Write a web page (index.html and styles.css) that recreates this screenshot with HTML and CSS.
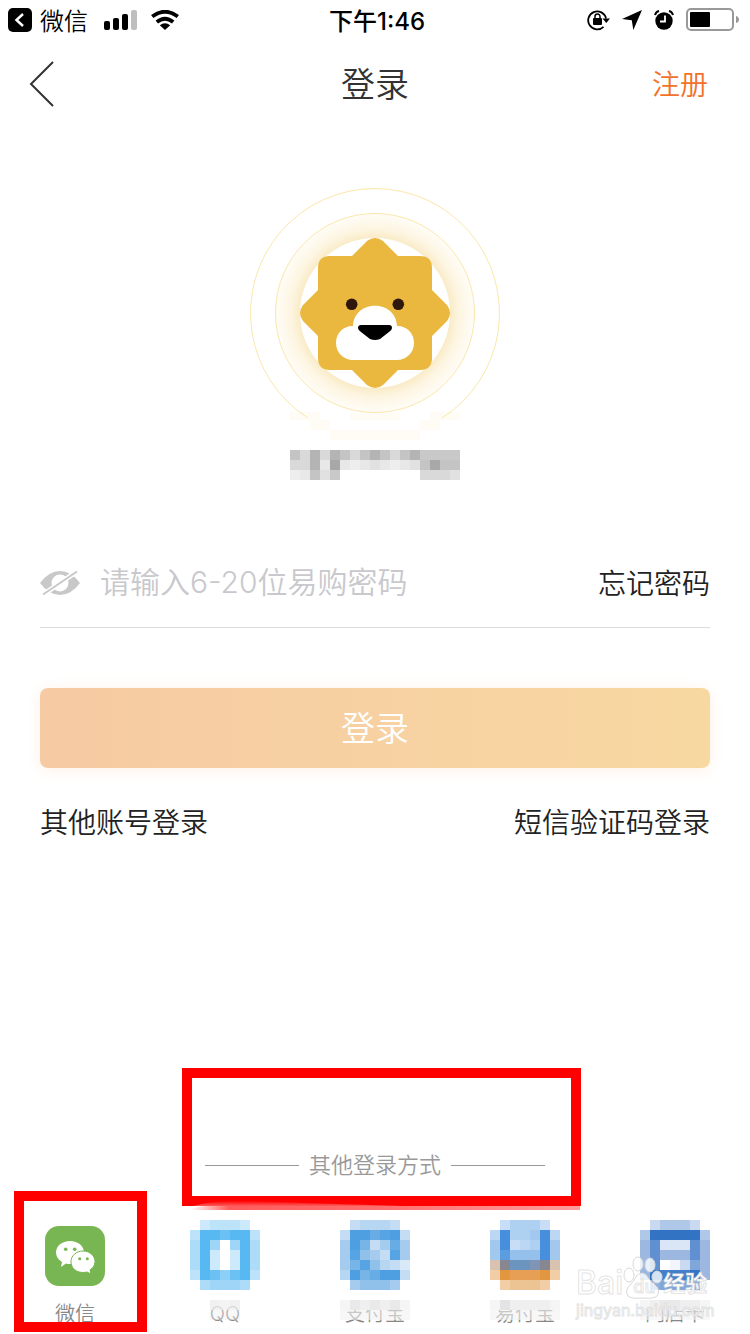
FILE: index.html
```html
<!DOCTYPE html>
<html lang="zh-CN">
<head>
    <meta charset="UTF-8">
    <title>登录</title>
    <meta name="viewport" content="width=device-width,initial-scale=1">
    <link rel="stylesheet" href="styles.css">
</head>
<body>
<div class="page">

    <!--状态栏-->
    <div class="status">
        <div class="status-left">
            <svg width="24" height="24" viewBox="0 0 24 24"><rect width="24" height="24" rx="5"/><path d="M15 6L8.500 12L15 18" fill="none" stroke="#fff" stroke-width="2.500"/></svg>
            <span class="status-app">微信</span>
            <svg class="signal" width="33" height="20" viewBox="0 0 33 20"><rect y="11" width="6" height="9" rx="2"/><rect x="9" y="8" width="6" height="12" rx="2"/><rect x="18" y="4" width="6" height="16" rx="2"/><rect x="27" width="6" height="20" rx="2" fill="#bfbfbf"/></svg>
            <svg width="28" height="20" viewBox="0 0 28 20"><g fill="none" stroke="#000" stroke-width="3.800"><path d="M1.200 6.500Q14-3.100 26.800 6.500"/><path d="M5.800 12Q14 5.400 22.200 12"/></g><path d="M14 20L8.800 15.200Q14 11.400 19.200 15.200Z"/></svg>
        </div>
        <div class="status-time">下午1:46</div>
        <div class="status-right">
            <svg width="23" height="22" viewBox="0 0 23 22"><path d="M16.500 17.800A9 9 0 1 1 19 9.500" fill="none" stroke="#000" stroke-width="1.800"/><path d="M15.500 9.500H23L19.300 14Z"/><rect x="6" y="9" width="9" height="7" rx="1"/><path d="M8 10V7.500a2.500 2.500 0 0 1 5 0V10" fill="none" stroke="#000" stroke-width="1.500"/></svg>
            <svg width="20" height="20" viewBox="0 0 20 20"><path d="M20 0L11.300 20L9.800 10.200L0 9Z"/></svg>
            <svg width="20" height="20" viewBox="0 0 20 20"><circle cx="10" cy="11" r="8.700"/><path d="M1 5Q2 1.500 5 1M19 5Q18 1.500 15 1" fill="none" stroke="#000" stroke-width="2"/><path d="M11 5.500V11.500H6" fill="none" stroke="#fff" stroke-width="1.800"/></svg>
            <svg width="54" height="24" viewBox="0 0 54 24"><rect x="1" y="1" width="46" height="21" rx="4" fill="none" stroke="#999" stroke-width="2"/><rect x="4" y="4" width="20" height="15" rx="1"/><path d="M50 8Q53 9 53 11.500T50 15Z" fill="#999"/></svg>
        </div>
    </div>

    <!--导航-->
    <header class="nav">
        <button class="nav-back" type="button" aria-label="返回">
            <svg width="26" height="46" viewBox="0 0 26 46"><path d="M25 1L3 23L25 45" fill="none" stroke="#333" stroke-width="2"/></svg>
        </button>
        <h1>登录</h1>
        <a class="nav-reg" href="#register">注册</a>
    </header>

    <!--头像-->
    <svg class="avatar" width="250" height="252" viewBox="0 0 250 252">
        <defs>
            <radialGradient id="glow" gradientUnits="userSpaceOnUse" cx="125" cy="125" r="100">
                <stop offset=".74" stop-color="#f9eac4"/>
                <stop offset=".84" stop-color="#fdf5e1"/>
                <stop offset="1" stop-color="#fffdf8"/>
            </radialGradient>
        </defs>
        <path d="M40 224h30v8h-30zM180 224h30v8h-30zM60 232h20v10h-20zM170 232h20v10h-20zM80 242h90v10h-90zM100 225h50v7h-50z" fill="#fefcf5"/>
        <circle cx="125" cy="125" r="99.500" fill="url(#glow)" stroke="#fbe7ac"/>
        <path d="M58 230A124.500 124.500 0 1 1 192 230" fill="none" stroke="#fbe7ac"/>
        <circle cx="125" cy="125" r="75" fill="#fff"/>
        <path d="M102 68L117 53Q125 47 133 53L148 68H170Q182 68 182 80V102L197 117Q203 125 197 133L182 148V170Q182 182 170 182H148L133 197Q125 203 117 197L102 182H80Q68 182 68 170V148L53 133Q47 125 53 117L68 102V80Q68 68 80 68Z" fill="#eab73f"/>
        <circle cx="101.700" cy="116.300" r="5.800" fill="#2f170c"/>
        <circle cx="148.300" cy="116.300" r="5.800" fill="#2f170c"/>
        <path d="M103 138C104 111 146 111 147 138C158 138 164 146 164 155C164 165 156 172 147 172H103C94 172 86 165 86 155C86 146 92 138 103 138Z" fill="#fff"/>
        <path d="M111 137H139Q142 137 142 140Q142 142 139 144L130 151Q125 153 120 151L111 144Q108 142 108 140Q108 137 111 137Z"/>
    </svg>

    <!--打码账号-->
    <svg class="account" width="170" height="30" viewBox="0 0 17 3" shape-rendering="crispEdges">
        <path stroke="#c4c4c4" d="M0 .5h1M5 .5h1M7 .5h1M9 .5h1M11 .5h1M13 1.500h1M15 1.500h2M2 2.500h1"/>
        <path stroke="#c9c9c9" d="M13 .5h4M4 2.500h1"/>
        <path stroke="#d9d9d9" d="M1 .5h1M3 .5h1M6 .5h1M10 .5h1M0 1.500h2M13 2.500h3"/>
        <path stroke="#b4b4b4" d="M2 .5h1M4 .5h1M8 .5h1M12 .5h1M2 1.500h1"/>
        <path stroke="#a8a8a8" d="M4 1.500h1M14 1.500h1"/>
        <path stroke="#e8e8e8" d="M3 1.500h1M5 1.500h1M7 1.500h1M9 1.500h1M11 1.500h1M1 2.500h1"/>
        <path stroke="#eee" d="M6 1.500h1M10 1.500h1M0 2.500h1"/>
        <path stroke="#e1e1e1" d="M8 1.500h1M12 1.500h1M3 2.500h1M16 2.500h1"/>
    </svg>

    <!--登录表单-->
    <form class="form">
        <div class="field">
            <button class="eye" type="button" aria-label="显示密码">
                <svg width="40" height="26" viewBox="0 0 40 26"><path d="M0 13Q9 1 20 1T40 13Q31 25 20 25T0 13Z" fill="#c8c8c8"/><circle cx="20" cy="13" r="6.500" fill="none" stroke="#fff" stroke-width="4"/><path d="M1 26L39 0" stroke="#fff" stroke-width="5"/><circle cx="20" cy="13" r="6" fill="#fff"/><path d="M3 24.500L37 1.500" stroke="#c8c8c8" stroke-width="2"/></svg>
            </button>
            <input type="password" aria-label="密码" placeholder="请输入6-20位易购密码">
            <a href="#forget">忘记密码</a>
        </div>
        <button class="submit" type="submit">登录</button>
        <div class="links">
            <a href="#account">其他账号登录</a>
            <a href="#sms">短信验证码登录</a>
        </div>
    </form>

    <!--其他登录方式-->
    <div class="other">
        <span>其他登录方式</span>
        <div class="mark mark-other"></div>
        <svg class="smear" width="398" height="12" viewBox="0 0 398 12">
            <defs>
                <linearGradient id="smear" x2="1"><stop stop-color="#ff6b6b" stop-opacity="0"/><stop offset=".1" stop-color="#ff5c5c"/><stop offset=".5" stop-color="#ff7070"/><stop offset="1" stop-color="#ff9c9c"/></linearGradient>
                <linearGradient id="smear-top" x2="0" y2="1"><stop stop-color="#ff5c5c" stop-opacity="0"/><stop offset="1" stop-color="#ff5c5c"/></linearGradient>
            </defs>
            <path d="M12 8Q30 2 70 3Q110 5 220 8Z" fill="url(#smear-top)"/>
            <path d="M8 12Q16 8 24 8H398V12Z" fill="url(#smear)"/>
        </svg>
    </div>
    <div class="ways">
        <a class="way" href="#wechat">
            <span class="way-icon">
                <svg width="60" height="60" viewBox="0 0 60 60"><rect width="60" height="60" rx="14" fill="#78b653"/><path d="M25 15C17 15 11 20 11 26.500C11 30.500 13 33.500 17 36L16 41L21 37.500Q23 38 25 38C33 38 39 33 39 26.500C39 20 33 15 25 15Z" fill="#fff"/><path d="M38 25C31 25 26 30 26 35.700C26 42 31 46.500 38 46.500Q40 46.500 42 46L46 48L45 44C48 42 50 39 50 35.700C50 30 45 25 38 25Z" fill="#fff" stroke="#78b653"/><g fill="#78b653"><circle cx="20.700" cy="23.300" r="1.800"/><circle cx="29.700" cy="23.300" r="1.800"/><circle cx="34.700" cy="32.700" r="1.500"/><circle cx="42.300" cy="32.700" r="1.500"/></g></svg>
            </span>
            <span class="way-name">微信</span>
            <span class="mark mark-wechat"></span>
        </a>
        <a class="way" href="#qq">
            <svg width="70" height="70" viewBox="0 0 7 7" shape-rendering="crispEdges">
                <path stroke="#58b8f2" d="M1 1.500h5M1 2.500h1M5 2.500h1M1 3.500h1M5 3.500h1M1 4.500h1M5 4.500h1M1 5.500h1M5 5.500h1"/>
                <path stroke="#cdeafc" d="M1 .5h1M5 .5h1M2 3.500h1M4 3.500h1M2 4.500h1M4 4.500h1"/>
                <path stroke="#bce3fa" d="M2 .5h3M0 1.500h1M6 1.500h1M0 5.500h1M6 5.500h1"/>
                <path stroke="#addcf9" d="M0 2.500h1M6 2.500h1M0 3.500h1M6 3.500h1M0 4.500h1M6 4.500h1M1 6.500h1M5 6.500h1"/>
                <path stroke="#9fd6f7" d="M2 2.500h1M4 2.500h1M2 6.500h3"/>
                <path stroke="#6cc1f4" d="M3 1.500h1M2 5.500h1M4 5.500h1"/>
                <path stroke="#8cd0f8" d="M3 5.500h1"/>
            </svg>
            <span class="way-name">QQ</span>
            <svg class="haze" width="70" height="20" viewBox="0 0 7 2" shape-rendering="crispEdges"><path stroke="#ededed" stroke-opacity=".8" d="M2 .5h1M4 .5h1"/><path stroke="#f1f1f1" stroke-opacity=".8" d="M3 .5h1"/><path stroke="#eee" stroke-opacity=".4" d="M2 1.500h3"/></svg>
        </a>
        <a class="way" href="#alipay">
            <svg width="70" height="70" viewBox="0 0 7 7" shape-rendering="crispEdges">
                <path stroke="#4d9fe2" d="M1 1.500h2M5 1.500h1M1 2.500h1M1 5.500h1M4 5.500h2"/>
                <path stroke="#56a4e3" d="M4 1.500h1M1 3.500h1M5 3.500h1M2 4.500h1"/>
                <path stroke="#68ace5" d="M3 1.500h1M5 2.500h1M3 5.500h1"/>
                <path stroke="#78b5e7" d="M2 2.500h1M1 4.500h1M2 5.500h1"/>
                <path stroke="#8fc1eb" d="M2 3.500h1M3 4.500h1M2 6.500h3"/>
                <path stroke="#a5ccef" d="M0 2.500h1M4 2.500h1M6 2.500h1M0 3.500h1M3 3.500h1M6 3.500h1M0 4.500h1M1 6.500h1M5 6.500h1"/>
                <path stroke="#b7d6f2" d="M2 .5h3M4 4.500h1M0 5.500h1"/>
                <path stroke="#c4ddf5" d="M1 .5h1M5 .5h1M0 1.500h1M6 1.500h1M3 2.500h1M4 3.500h1M5 4.500h1M6 5.500h1"/>
                <path stroke="#d8e9f8" d="M6 4.500h1"/>
            </svg>
            <span class="way-name">支付宝</span>
            <svg class="haze" width="70" height="20" viewBox="0 0 7 2" shape-rendering="crispEdges"><path stroke="#f5f5f5" d="M0 .5h1M6 .5h1"/><path stroke="#e9e9e9" d="M1 .5h1M3 .5h1M5 .5h1"/><path stroke="#efefef" d="M2 .5h1M4 .5h1"/><path stroke="#f2f2f2" stroke-opacity=".6" d="M0 1.500h7"/></svg>
        </a>
        <a class="way" href="#yifubao">
            <svg width="70" height="70" viewBox="0 0 7 7" shape-rendering="crispEdges">
                <path stroke="#478fdd" d="M1 1.500h1M5 1.500h1M1 2.500h1M5 2.500h1M5 3.500h1"/>
                <path stroke="#5b9de0" d="M1 3.500h1"/>
                <path stroke="#96c0ec" d="M2 3.500h3"/>
                <path stroke="#a2c8ee" d="M4 1.500h1M0 2.500h1M6 2.500h1M0 3.500h1M6 3.500h1"/>
                <path stroke="#aed0f1" d="M2 .5h3M2 1.500h2M4 2.500h1"/>
                <path stroke="#bcd7f3" d="M0 1.500h1M6 1.500h1M3 2.500h1"/>
                <path stroke="#c8def6" d="M1 .5h1M5 .5h1M2 2.500h1"/>
                <path stroke="#d9c2b0" d="M0 4.500h1M6 4.500h1"/>
                <path stroke="#868790" d="M1 4.500h1M5 4.500h1"/>
                <path stroke="#6b94bf" d="M2 4.500h2"/>
                <path stroke="#8095b5" d="M4 4.500h1"/>
                <path stroke="#e29640" d="M1 5.500h1M5 5.500h1"/>
                <path stroke="#e69f55" d="M2 5.500h3"/>
                <path stroke="#f2cea6" d="M0 5.500h1M6 5.500h1M1 6.500h1M5 6.500h1"/>
                <path stroke="#ecc392" d="M2 6.500h3"/>
            </svg>
            <span class="way-name">易付宝</span>
            <svg class="haze" width="70" height="20" viewBox="0 0 7 2" shape-rendering="crispEdges"><path stroke="#f5f5f5" d="M0 .5h1M6 .5h1"/><path stroke="#e4e4e4" d="M1 .5h1"/><path stroke="#efefef" d="M2 .5h4"/><path stroke="#f2f2f2" stroke-opacity=".6" d="M0 1.500h7"/></svg>
        </a>
        <a class="way" href="#card">
            <svg width="70" height="70" viewBox="0 0 7 7" shape-rendering="crispEdges">
                <path stroke="#3373c4" d="M1 1.500h5M1 5.500h1M5 5.500h1"/>
                <path stroke="#4480ca" d="M2 5.500h3"/>
                <path stroke="#6090d2" d="M1 2.500h1M5 2.500h1M1 3.500h1M5 3.500h1M1 4.500h1"/>
                <path stroke="#80a6da" d="M5 4.500h1M2 6.500h3"/>
                <path stroke="#8fb0dd" d="M1 6.500h1M5 6.500h1"/>
                <path stroke="#9cb8e1" d="M0 2.500h1M6 2.500h1M0 3.500h1M2 3.500h3M6 3.500h1M0 4.500h1M6 4.500h1M0 5.500h1M6 5.500h1"/>
                <path stroke="#b0c8e8" d="M2 .5h3M0 1.500h1M6 1.500h1"/>
                <path stroke="#c9d9f0" d="M1 .5h1M5 .5h1M4 4.500h1"/>
                <path stroke="#dae5f5" d="M2 2.500h3"/>
                <path stroke="#f2f5fb" d="M3 4.500h1"/>
            </svg>
            <span class="way-name">门店卡</span>
            <svg class="haze" width="70" height="20" viewBox="0 0 7 2" shape-rendering="crispEdges"><path stroke="#f5f5f5" d="M0 .5h1M6 .5h1"/><path stroke="#e9e9e9" d="M2 .5h2"/><path stroke="#efefef" d="M1 .5h1M4 .5h2"/><path stroke="#f2f2f2" stroke-opacity=".6" d="M0 1.500h7"/></svg>
        </a>
    </div>

    <!--水印-->
    <div class="watermark">
        <div class="wm-logo">
            <span class="wm-bai">Bai</span>
            <span class="wm-paw">
                <svg width="40" height="46" viewBox="0 0 40 46"><g fill="#fff" fill-opacity=".8" stroke="#d9d9d9"><ellipse cx="6" cy="21" rx="5" ry="7"/><ellipse cx="15" cy="10" rx="5" ry="7"/><ellipse cx="27" cy="11" rx="5" ry="7"/><ellipse cx="34" cy="23" rx="5" ry="6"/><path d="M19 19Q23 19 26 25Q28 28 32 31Q38 36 34 42Q31 45 20 44Q8 45 5 42Q1 36 8 30Q11 27 13 23Q15 19 19 19Z"/></g></svg>
                <b>du</b>
            </span>
            <span class="wm-cn">经验</span>
        </div>
        <div class="wm-url">jingyan.baidu.com</div>
    </div>
</div>
</body>
</html>
```
FILE: styles.css
```css
*{
    padding: 0;
    margin: 0;
    box-sizing: border-box;
}
body{
    font-family: Inter,"Noto Sans CJK SC",sans-serif;
    font-size: 28px;
    font-weight: 350;
    color: #222;
    background-color: #fff;
}
a{
    color: inherit;
    text-decoration: none;
}
button{
    border: 0;
    background: none;
    font: inherit;
}
svg{
    display: block;
    flex-shrink: 0;
}
.page{
    position: relative;
    display: flex;
    flex-direction: column;
    min-height: 100vh;
    overflow: hidden;
}

/* 状态栏 */
.status{
    display: grid;
    grid-template-columns: 1fr auto 1fr;
    align-items: center;
    height: 40px;
    padding: 0 10px 0 8px;
    font-size: 24px;
    color: #000;
}
.status-left,.status-right{
    display: flex;
    align-items: center;
}
.status-app{
    margin: 0 16px 0 8px;
    padding-bottom: 2px;
}
.signal{
    margin-right: 14px;
}
.status-time{
    padding: 0 0 2px 6px;
    font-weight: 500;
}
.status-right{
    justify-content: flex-end;
    gap: 12px;
}

/* 导航 */
.nav{
    display: grid;
    grid-template-columns: 1fr auto 1fr;
    align-items: center;
    height: 88px;
    padding: 0 28px;
}
.nav-back{
    justify-self: start;
}
.nav h1{
    padding-bottom: 4px;
    font-size: 34px;
    font-weight: inherit;
    color: #333;
}
.nav-reg{
    justify-self: end;
    padding: 0 14px 2px 0;
    color: #f2722b;
}

/* 头像 */
.avatar{
    margin: 60px auto 0;
}
.account{
    margin: 10px auto 0;
}

/* 表单 */
.form{
    padding: 60px 40px 0;
}
.field{
    display: flex;
    align-items: center;
    height: 88px;
    padding-bottom: 2px;
    border-bottom: 1px solid #dcdcdc;
}
.field a{
    padding-bottom: 2px;
}
.eye{
    margin-right: 20px;
}
.field input{
    flex: 1;
    min-width: 0;
    height: 60px;
    padding-bottom: 2px;
    border: 0;
    outline: 0;
    font: inherit;
    font-size: 30px;
}
.field input::placeholder{
    color: #c8c8cd;
}
.submit{
    display: block;
    width: 100%;
    height: 80px;
    margin-top: 60px;
    padding-bottom: 4px;
    border-radius: 8px;
    font-size: 34px;
    color: #fff;
    background-image: linear-gradient(90deg,#f6caa3,#f8d8a1);
    box-shadow: 0 2px 16px #fdf0e4;
}
.links{
    display: flex;
    justify-content: space-between;
    margin-top: 33px;
    line-height: 44px;
}

/* 其他登录方式 */
.other{
    position: relative;
    display: flex;
    align-items: center;
    gap: 10px;
    width: 340px;
    margin: auto auto 39px;
    line-height: 32px;
    font-size: 22px;
    color: #999;
}
.other::before,.other::after{
    content: "";
    flex: 1;
    height: 1px;
    background-color: #999;
}
.mark{
    position: absolute;
    border: 10px solid #f00;
}
.mark-other{
    top: -81px;
    right: -36px;
    bottom: -25px;
    left: -23px;
}
.smear{
    position: absolute;
    bottom: -29px;
    left: -23px;
}
.ways{
    display: grid;
    grid-template-columns: repeat(5,1fr);
    padding-bottom: 6px;
}
.way{
    position: relative;
    display: flex;
    flex-direction: column;
    align-items: center;
    gap: 10px;
}
.way-icon{
    display: flex;
    align-items: center;
    height: 70px;
}
.way-icon svg{
    margin-top: 2px;
}
.way-name{
    line-height: 28px;
    font-size: 20px;
    color: #888;
}
.haze{
    position: absolute;
    top: 80px;
}
.mark-wechat{
    top: -29px;
    right: 3px;
    bottom: -4px;
    left: 14px;
}

/* 水印 */
.watermark{
    position: absolute;
    right: 40px;
    bottom: 14px;
    width: 134px;
    font-weight: 500;
    color: #fff;
    -webkit-text-stroke: 1px rgba(200,200,200,0.5);
}
.wm-logo{
    display: flex;
    align-items: flex-end;
    line-height: 34px;
}
.wm-bai{
    font-size: 32px;
}
.wm-paw{
    position: relative;
}
.wm-paw b{
    position: absolute;
    bottom: 0;
    left: 10px;
    font-size: 18px;
    font-weight: 500;
    line-height: 26px;
}
.wm-cn{
    font-size: 22px;
    font-weight: 700;
}
.wm-url{
    font-size: 16px;
    font-weight: 400;
    line-height: 20px;
}
```
